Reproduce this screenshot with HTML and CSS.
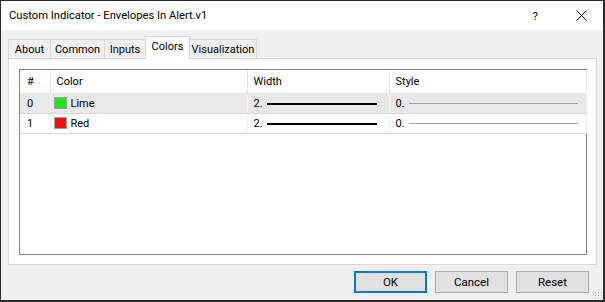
FILE: index.html
```html
<!DOCTYPE html>
<html lang="en">
<head>
<meta charset="UTF-8">
<meta name="viewport" content="width=device-width, initial-scale=1.0">
<title>Custom Indicator - Envelopes In Alert.v1</title>
<link rel="stylesheet" href="styles.css">
</head>
<body>
<div class="window">
    <div class="titlebar">
        <span class="title">Custom Indicator - Envelopes In Alert.v1</span>
        <span class="help">?</span>
        <span class="close">
            <svg width="11" height="11" viewBox="0 0 11 11"><path d="M0.5 0.5 L10.5 10.5 M10.5 0.5 L0.5 10.5" stroke="#000" stroke-width="1" fill="none"/></svg>
        </span>
    </div>
    <div class="content">
        <div class="tabs">
            <div class="tab tab-about">About</div>
            <div class="tab tab-common">Common</div>
            <div class="tab tab-inputs">Inputs</div>
            <div class="tab tab-colors active">Colors</div>
            <div class="tab tab-visual">Visualization</div>
        </div>
        <div class="panel">
            <div class="list">
                <table class="colors">
                    <colgroup>
                        <col class="c-num">
                        <col class="c-color">
                        <col class="c-width">
                        <col class="c-style">
                    </colgroup>
                    <thead>
                        <tr><th>#</th><th>Color</th><th>Width</th><th>Style</th></tr>
                    </thead>
                    <tbody>
                        <tr class="selected">
                            <td>0</td>
                            <td><span class="swatch lime"></span>Lime</td>
                            <td><div class="sample wide">2.<span class="line thick"></span></div></td>
                            <td><div class="sample">0.<span class="line thin"></span></div></td>
                        </tr>
                        <tr>
                            <td>1</td>
                            <td><span class="swatch red"></span>Red</td>
                            <td><div class="sample wide">2.<span class="line thick"></span></div></td>
                            <td><div class="sample">0.<span class="line thin"></span></div></td>
                        </tr>
                    </tbody>
                </table>
            </div>
        </div>
        <div class="buttons">
            <button class="btn default">OK</button>
            <button class="btn">Cancel</button>
            <button class="btn">Reset</button>
        </div>
    </div>
    <div class="grip"></div>
</div>
</body>
</html>
```

FILE: styles.css
```css
body {
    margin: 0;
    font-family: Roboto, "Noto Sans", Arial, sans-serif;
    font-size: 11px;
    color: #000;
    background: #2b2b2b;
}
.window {
    width: 605px;
    height: 302px;
    box-sizing: border-box;
    border: 1px solid #2b2b2b;
    border-right-width: 2px;
    border-bottom-width: 2px;
    background: #f0f0f0;
    display: flex;
    flex-direction: column;
    position: relative;
}
.titlebar {
    height: 29px;
    background: #fff;
    display: flex;
    align-items: center;
    padding-left: 8px;
}
.title {
    flex: 1;
    font-size: 11.2px;
}
.help {
    font-size: 11.5px;
    margin-right: 38px;
}
.close {
    display: flex;
    margin-right: 16px;
}
.content {
    flex: 1;
    display: flex;
    flex-direction: column;
    padding: 6px 6px 0 7px;
}
.tabs {
    display: flex;
    align-items: flex-end;
    height: 23px;
    margin-bottom: -1px;
}
.tab {
    box-sizing: border-box;
    height: 20px;
    line-height: 19px;
    text-align: center;
    border: 1px solid #d9d9d9;
    border-bottom: none;
    margin-left: -1px;
    background: #f0f0f0;
}
.tab:first-child {
    margin-left: 0;
}
.tab-about { width: 43px; }
.tab-common { width: 55px; }
.tab-inputs { width: 42px; }
.tab-colors { width: 45px; }
.tab-visual { width: 68px; }
.tab.active {
    height: 23px;
    line-height: 20px;
    background: #fff;
    position: relative;
    z-index: 1;
}
.panel {
    height: 207px;
    box-sizing: border-box;
    border: 1px solid #d9d9d9;
    background: #fff;
    padding: 10px 9px 9px 10px;
}
.list {
    height: 100%;
    box-sizing: border-box;
    border: 1px solid #828282;
}
.colors {
    border-collapse: collapse;
    table-layout: fixed;
    width: 566px;
}
.c-num { width: 30px; }
.c-color { width: 197px; }
.c-width { width: 142px; }
.c-style { width: 197px; }
.colors th {
    height: 23px;
    font-weight: normal;
    text-align: left;
    padding: 0 0 0 6px;
    border-right: 1px solid #e5e5e5;
    border-bottom: 1px solid #e5e5e5;
}
.colors td {
    height: 19px;
    padding: 0 0 0 6px;
    border-right: 1px solid #f0f0f0;
    border-bottom: 1px solid #d9d9d9;
    white-space: nowrap;
}
.colors th:first-child,
.colors td:first-child {
    padding-left: 7px;
}
.colors td:nth-child(2) {
    padding-left: 3px;
}
.colors tr.selected td {
    background: #e8e8e8;
}
.swatch {
    display: inline-block;
    width: 11px;
    height: 10px;
    border: 1px solid #a0a0a0;
    vertical-align: -2px;
    margin-right: 4px;
}
.swatch.lime { background: #1ee61e; }
.swatch.red { background: #f01010; }
.sample {
    display: flex;
    align-items: center;
    padding-right: 8px;
}
.sample.wide {
    padding-right: 12px;
}
.line {
    flex: 1;
    margin-left: 4px;
}
.line.thick {
    height: 2px;
    background: #000;
}
.line.thin {
    height: 1px;
    background: #a0a0a0;
}
.buttons {
    display: flex;
    justify-content: flex-end;
    gap: 8px;
    padding: 6px 8px 0 0;
}
.btn {
    width: 73px;
    height: 22px;
    box-sizing: border-box;
    font-family: inherit;
    font-size: 11.5px;
    background: #e1e1e1;
    border: 1px solid #adadad;
    padding: 0;
    color: #000;
}
.btn.default {
    border: 2px solid #0078d7;
}
/* size grip in the corner */
.grip {
    position: absolute;
    right: 1px;
    bottom: 1px;
    width: 8px;
    height: 8px;
    background: radial-gradient(circle, #b8b8b8 0.8px, transparent 1px) 0 0 / 3px 3px;
}
```
